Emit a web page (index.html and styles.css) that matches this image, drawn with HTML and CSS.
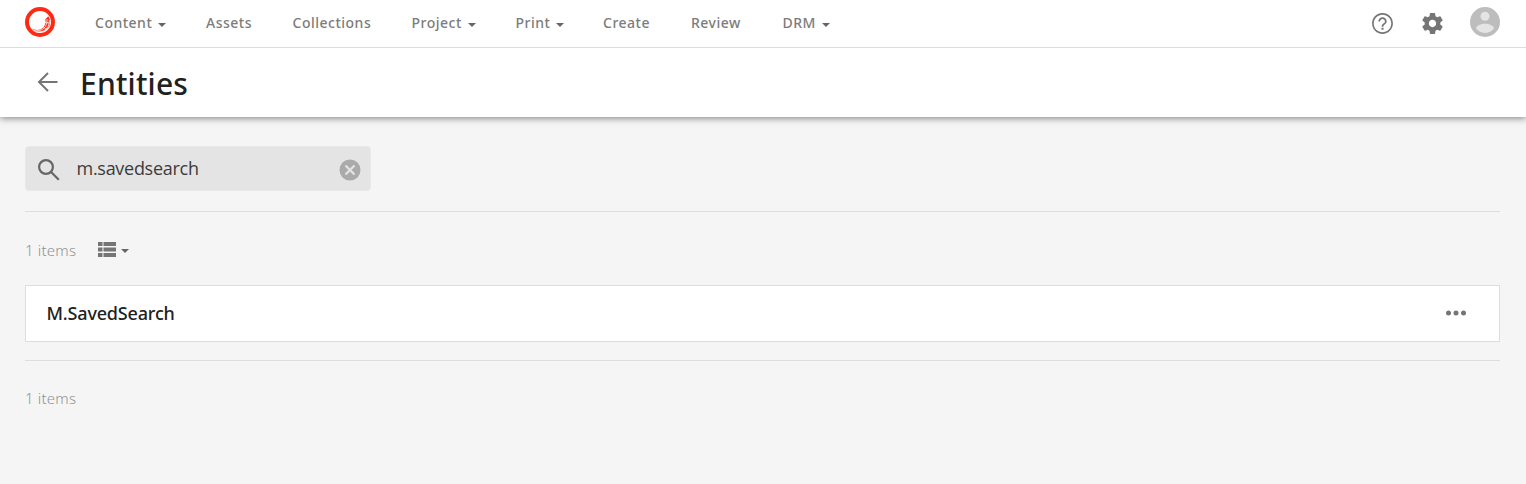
FILE: index.html
```html
<!DOCTYPE html>
<html lang="en">
<head>
<meta charset="utf-8">
<title>Entities</title>
<link rel="stylesheet" href="styles.css">
</head>
<body>
<header class="topbar">
  <svg class="logo" viewBox="0 0 30 30">
    <circle cx="15" cy="15" r="13" fill="#fff" stroke="#ff2a13" stroke-width="4"/>
    <path d="M20.300 12.300L23.400 9.200Q26.800 15 23.400 20.200Q18.500 26.200 10.500 24.300L6.500 21.800Q14 24.600 18.200 20.400Q21.600 16.600 20.300 12.300Z" fill="#ff2a13"/>
    <path d="M8.200 23Q16 25.500 20.400 19.500Q22.700 16 22 12M11 25Q19.500 26 23.200 19.300Q24.800 16 24.300 13M20 15.500L24.500 16M18 19.500L21.500 22.500" fill="none" stroke="#fff" stroke-width=".75"/>
  </svg>
  <nav class="nav">
    <a class="nav-item n-content"><span>Content</span><i class="caret"></i></a>
    <a class="nav-item n-assets">Assets</a>
    <a class="nav-item n-collections">Collections</a>
    <a class="nav-item n-project"><span>Project</span><i class="caret"></i></a>
    <a class="nav-item n-print"><span>Print</span><i class="caret"></i></a>
    <a class="nav-item n-create">Create</a>
    <a class="nav-item n-review">Review</a>
    <a class="nav-item n-drm"><span>DRM</span><i class="caret"></i></a>
  </nav>
  <div class="tools">
    <svg class="tool" viewBox="0 0 24 24"><path d="M11 18h2v-2h-2v2zm1-16C6.480 2 2 6.480 2 12s4.480 10 10 10 10-4.480 10-10S17.520 2 12 2zm0 18.400c-4.630 0-8.400-3.770-8.400-8.400s3.770-8.400 8.400-8.400 8.400 3.770 8.400 8.400-3.770 8.400-8.400 8.400zm0-14.400c-2.210 0-4 1.790-4 4h1.700c0-1.300 1-2.300 2.300-2.300s2.300 1 2.300 2.300c0 2-3.100 1.750-3.100 5h1.700c0-2.250 3.100-2.500 3.100-5 0-2.210-1.790-4-4-4z"/></svg>
    <svg class="tool" viewBox="0 0 24 24"><path d="M19.430 12.980c.04-.32.07-.64.07-.98s-.03-.66-.07-.98l2.110-1.650c.19-.15.24-.42.12-.64l-2-3.460c-.12-.22-.39-.3-.61-.22l-2.490 1c-.52-.4-1.080-.73-1.690-.98l-.38-2.650C14.460 2.180 14.250 2 14 2h-4c-.25 0-.46.18-.49.42l-.38 2.650c-.61.25-1.170.59-1.690.98l-2.490-1c-.23-.09-.49 0-.61.22l-2 3.460c-.13.22-.07.49.12.64l2.110 1.650c-.04.32-.07.65-.07.98s.03.66.07.98l-2.110 1.650c-.19.15-.24.42-.12.64l2 3.460c.12.22.39.3.61.22l2.490-1c.52.4 1.080.73 1.690.98l.38 2.650c.03.24.24.42.49.42h4c.25 0 .46-.18.49-.42l.38-2.650c.61-.25 1.170-.59 1.690-.98l2.490 1c.23.09.49 0 .61-.22l2-3.460c.12-.22.07-.49-.12-.64l-2.110-1.650zM12 15.500c-1.930 0-3.500-1.570-3.500-3.500s1.570-3.500 3.500-3.500 3.500 1.570 3.500 3.500-1.570 3.500-3.500 3.500z"/></svg>
    <svg class="avatar" viewBox="0 0 30 30"><circle cx="15" cy="15" r="15" fill="#bdbdbd"/><circle cx="15" cy="9.200" r="4.500" fill="#e4e4e4"/><path d="M6 21.500C6 18.500 11 16.800 15 16.800S24 18.500 24 21.500C22 24.300 18.700 25.900 15 25.900S8 24.300 6 21.500Z" fill="#e4e4e4"/></svg>
  </div>
</header>
<section class="titlebar">
  <svg class="back" viewBox="0 0 21 21"><path d="M20.500 10H2.800M11 1L2 10L11 19"/></svg>
  <h1 class="title">Entities</h1>
</section>
<main class="page">
  <div class="search">
    <svg class="search-icon" viewBox="0 0 22 22"><circle cx="8" cy="8" r="6.900"/><path d="M13 13L20.800 20.800"/></svg>
    <span class="query">m.savedsearch</span>
    <svg class="clear" viewBox="0 0 22 22"><circle cx="11" cy="11" r="10.500"/><path d="M6.500 6.500L15.500 15.500M15.500 6.500L6.500 15.500"/></svg>
  </div>
  <hr class="rule">
  <div class="listbar">
    <span class="count">1 items</span>
    <svg class="view" viewBox="0 0 18 15"><path d="M0 0h4.500v4H0zM5.500 0H18v4H5.500zM0 5.500h4.500v4H0zM5.500 5.500H18v4H5.500zM0 11h4.500v4H0zM5.500 11H18v4H5.500z"/></svg>
    <i class="caret"></i>
  </div>
  <article class="row">
    <span class="name">M.SavedSearch</span>
    <svg class="more" viewBox="0 0 20 6"><circle cx="2.500" cy="3" r="2.500"/><circle cx="10" cy="3" r="2.500"/><circle cx="17.500" cy="3" r="2.500"/></svg>
  </article>
  <hr class="rule">
  <div class="footer-count count">1 items</div>
</main>
</body>
</html>
```
FILE: styles.css
```css
* { box-sizing: border-box; }
body { margin: 0; height: 484px; background: #f5f5f5; font-family: "Noto Sans", "Open Sans", sans-serif; color: #212121; overflow: hidden; }
.topbar { position: relative; z-index: 1; display: flex; height: 48px; padding: 7px 26px 0 25px; background: #fff; border-bottom: 1px solid #ddd; }
.logo { width: 30px; height: 30px; }
.nav { display: flex; margin-left: 40px; height: 32px; }
.nav-item { display: flex; align-items: center; gap: 5px; font-size: 14px; font-weight: 500; line-height: 32px; letter-spacing: .5px; color: #7c7c7c; white-space: nowrap; }
.caret { width: 0; height: 0; border: 4.500px solid transparent; border-top-color: #666; border-bottom: 0; margin-top: 3px; }
.nav .caret { margin-left: .8px; }
.n-content { width: 111px; }
.n-assets { width: 86.500px; }
.n-collections { width: 119px; }
.n-project { width: 104px; }
.n-print { width: 87.500px; }
.n-create { width: 88px; }
.n-review { width: 91.500px; }
.tools { display: flex; margin-left: auto; }
.tool { width: 25px; height: 25px; margin: 4px 25px 0 0; fill: #757575; }
.avatar { width: 30px; height: 30px; }
.titlebar { position: relative; display: flex; height: 69px; padding: 0 37px; background: #fff; box-shadow: 0 1px 7px rgba(0,0,0,.5); }
.back { width: 21px; height: 21px; margin-top: 24px; fill: none; stroke: #757575; stroke-width: 2; }
.title { margin: 15px 0 0 22px; font-size: 30px; line-height: 41px; font-weight: 500; letter-spacing: .2px; }
.page { padding: 29px 26px 0 25px; }
.search { display: flex; width: 346px; height: 45px; padding: 0 9px 0 12px; border: 1px solid #e9e9e9; border-radius: 4px; background: #e4e4e4; }
.search-icon { width: 22px; height: 22px; margin-top: 12px; fill: none; stroke: #666; stroke-width: 2.200; }
.query { margin-left: 16.500px; font-family: "Open Sans", sans-serif; font-size: 18px; font-weight: 400; line-height: 43px; letter-spacing: -.28px; color: #3c3c3c; }
.clear { width: 22px; height: 22px; margin: 12px 0 0 auto; fill: #aaa; stroke: none; }
.clear path { stroke: #e4e4e4; stroke-width: 2.200; }
.rule { height: 1px; margin: 20px 0 0; border: 0; background: #ddd; }
.listbar { display: flex; height: 73px; padding-top: 27px; }
.count { color: #929292; font-size: 15px; font-weight: 300; line-height: 22px; letter-spacing: .2px; }
.view { width: 18px; height: 15px; margin: 3px 5px 0 22px; fill: #757575; }
.listbar .caret { margin-top: 10px; }
.row { display: flex; justify-content: space-between; height: 57px; padding: 0 33px 0 20.500px; border: 1px solid #ddd; background: #fff; }
.name { font-size: 18px; font-weight: 500; line-height: 55px; letter-spacing: -.18px; }
.more { width: 20px; height: 6px; margin-top: 24px; fill: #757575; }
.row + .rule { margin-top: 18px; }
.footer-count { margin-top: 26px; }
```
